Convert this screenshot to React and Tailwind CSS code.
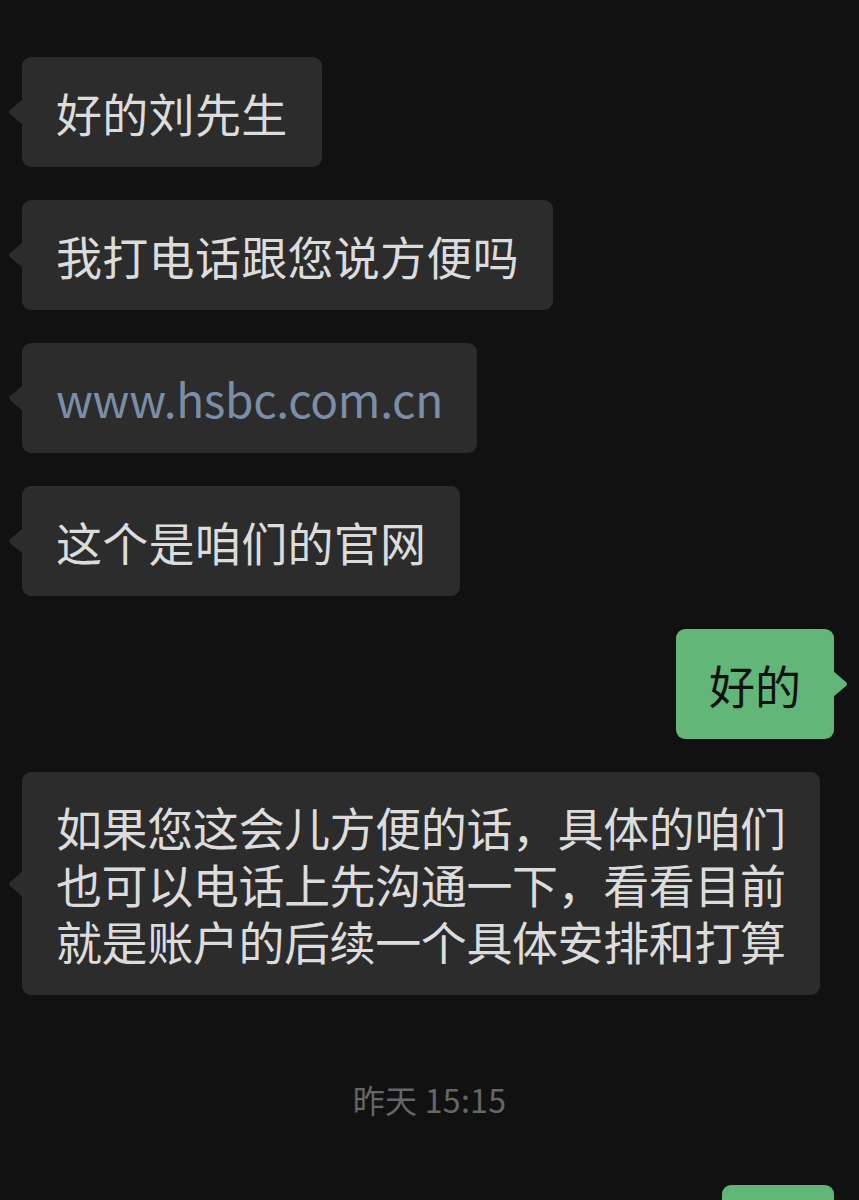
const font = { fontFamily: '"Noto Sans CJK SC", "Noto Sans", sans-serif' };

function LeftTail() {
  return (
    <svg className="absolute left-[-14px] top-1/2 -translate-y-1/2" width="15" height="26" viewBox="0 0 15 26">
      <path d="M15 0 L15 26 L2 15 Q0 13 2 11 Z" fill="#2c2c2c" />
    </svg>
  );
}

function RightTail() {
  return (
    <svg className="absolute right-[-14px] top-1/2 -translate-y-1/2" width="15" height="26" viewBox="0 0 15 26">
      <path d="M0 0 L0 26 L13 15 Q15 13 13 11 Z" fill="#62b677" />
    </svg>
  );
}

function Incoming({ children, link, multi }) {
  let cls = 'text-[#dcdcdc] tracking-[0.3px] leading-[58px]';
  if (link) cls = 'text-[#7b8ea8] tracking-[-0.3px] leading-[58px]';
  if (multi) cls = 'text-[#dcdcdc] tracking-[-0.4px] leading-[57px]';
  return (
    <div className="flex justify-start pl-[22px]">
      <div className={'relative rounded-[9px] bg-[#2c2c2c] px-[34px] py-[26px] text-[46px] ' + cls}>
        <LeftTail />
        {children}
      </div>
    </div>
  );
}

function Outgoing({ children }) {
  return (
    <div className="flex justify-end pr-[25px]">
      <div className="relative rounded-[9px] bg-[#62b677] px-[33px] py-[26px] text-[46px] leading-[58px] text-[#111111]">
        <RightTail />
        {children}
      </div>
    </div>
  );
}

export default function App() {
  return (
    <div className="h-[1200px] w-full overflow-hidden bg-[#111111]" style={font}>
      <div className="flex flex-col gap-[33px] pt-[57px]">
        <Incoming>好的刘先生</Incoming>
        <Incoming>我打电话跟您说方便吗</Incoming>
        <Incoming link>www.hsbc.com.cn</Incoming>
        <Incoming>这个是咱们的官网</Incoming>
        <Outgoing>好的</Outgoing>
        <Incoming multi>
          <div>如果您这会儿方便的话，具体的咱们</div>
          <div>也可以电话上先沟通一下，看看目前</div>
          <div>就是账户的后续一个具体安排和打算</div>
        </Incoming>
      </div>
      <div className="mt-[82px] text-center text-[32px] leading-[44px] tracking-[0.3px] text-[#666666]">昨天 15:15</div>
      <div className="mt-[64px]">
        <Outgoing>嗯</Outgoing>
      </div>
    </div>
  );
}
